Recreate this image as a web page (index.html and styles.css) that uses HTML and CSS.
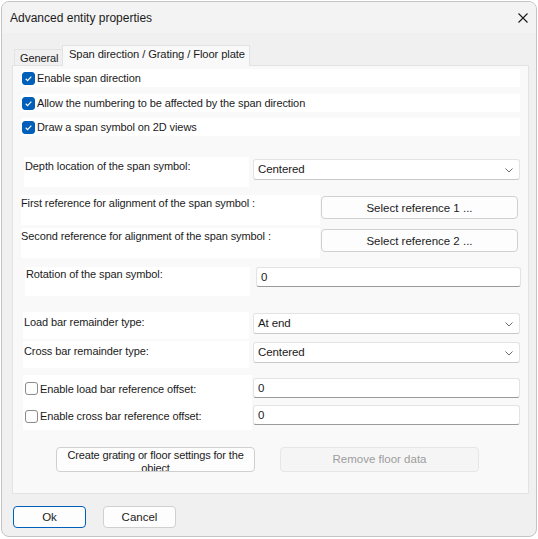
FILE: index.html
```html
<!DOCTYPE html>
<html lang="en">
<head>
    <meta charset="UTF-8">
    <title>Advanced entity properties</title>
    <link rel="stylesheet" href="styles.css">
</head>
<body>
    <div class="window">
        <div class="titlebar">
            <span class="title">Advanced entity properties</span>
            <svg class="close" width="10" height="10" viewBox="0 0 10 10">
                <path d="M0.5 0.5 L9.5 9.5 M9.5 0.5 L0.5 9.5" stroke="#1a1a1a" stroke-width="1.1" fill="none"/>
            </svg>
        </div>

        <div class="dialog-body">
            <div class="tabs">
                <div class="tab">General</div>
                <div class="tab active">Span direction / Grating / Floor plate</div>
            </div>

            <div class="panel">
                <div class="check-row">
                    <span class="checkbox checked"><svg viewBox="0 0 13 13"><path d="M3.2 6.8 L5.4 9 L9.8 4.3" /></svg></span>
                    <span>Enable span direction</span>
                </div>
                <div class="check-row gap-7">
                    <span class="checkbox checked"><svg viewBox="0 0 13 13"><path d="M3.2 6.8 L5.4 9 L9.8 4.3" /></svg></span>
                    <span>Allow the numbering to be affected by the span direction</span>
                </div>
                <div class="check-row gap-6">
                    <span class="checkbox checked"><svg viewBox="0 0 13 13"><path d="M3.2 6.8 L5.4 9 L9.8 4.3" /></svg></span>
                    <span>Draw a span symbol on 2D views</span>
                </div>

                <div class="row row-depth">
                    <div class="label-box">Depth location of the span symbol:</div>
                    <div class="select">Centered<svg class="chevron" viewBox="0 0 8 5"><path d="M0.5 0.5 L4 4 L7.5 0.5"/></svg></div>
                </div>

                <div class="row row-ref">
                    <div class="label-box">First reference for alignment of the span symbol :</div>
                    <button class="btn ref-btn">Select reference 1 ...</button>
                </div>
                <div class="row row-ref second">
                    <div class="label-box">Second reference for alignment of the span symbol :</div>
                    <button class="btn ref-btn">Select reference 2 ...</button>
                </div>

                <div class="row row-rotation">
                    <div class="label-box">Rotation of the span symbol:</div>
                    <div class="input">0</div>
                </div>

                <div class="row row-remainder">
                    <div class="label-box">Load bar remainder type:</div>
                    <div class="select">At end<svg class="chevron" viewBox="0 0 8 5"><path d="M0.5 0.5 L4 4 L7.5 0.5"/></svg></div>
                </div>
                <div class="row row-remainder second">
                    <div class="label-box">Cross bar remainder type:</div>
                    <div class="select">Centered<svg class="chevron" viewBox="0 0 8 5"><path d="M0.5 0.5 L4 4 L7.5 0.5"/></svg></div>
                </div>

                <div class="offsets">
                    <div class="row row-offset">
                        <div class="label-box">
                            <span class="checkbox"></span>
                            <span>Enable load bar reference offset:</span>
                        </div>
                        <div class="input">0</div>
                    </div>
                    <div class="row row-offset second">
                        <div class="label-box">
                            <span class="checkbox"></span>
                            <span>Enable cross bar reference offset:</span>
                        </div>
                        <div class="input">0</div>
                    </div>
                </div>

                <div class="row floor-actions">
                    <button class="btn floor-btn create">Create grating or floor settings for the object</button>
                    <button class="btn floor-btn" disabled>Remove floor data</button>
                </div>
            </div>

            <div class="footer">
                <button class="btn footer-btn default">Ok</button>
                <button class="btn footer-btn">Cancel</button>
            </div>
        </div>
    </div>
</body>
</html>
```

FILE: styles.css
```css
:root {
    --text: #1b1b1b;
    --accent: #005fb8;
    --border-soft: #e3e3e3;
    --border-btn: #d0d0d0;
}

body {
    margin: 0;
    background: #ffffff;
    font-family: "Liberation Sans", Arial, sans-serif;
    font-size: 11px;
    letter-spacing: -0.1px;
    color: var(--text);
}

.window {
    box-sizing: border-box;
    width: 536px;
    height: 536px;
    margin: 1px;
    border: 1px solid #c4c4c4;
    border-radius: 8px;
    overflow: hidden;
    background: #f0f0f0;
    display: flex;
    flex-direction: column;
}

.titlebar {
    height: 31px;
    flex: none;
    background: #f3f3f3;
    display: flex;
    align-items: center;
    justify-content: space-between;
    padding: 0 8px 0 8px;
}

.title {
    font-size: 12px;
    letter-spacing: 0;
    padding-top: 1px;
}

.close {
    display: block;
    margin-top: 1px;
}

.dialog-body {
    flex: 1;
    display: flex;
    flex-direction: column;
}

/* tab strip */
.tabs {
    display: flex;
    align-items: flex-end;
    margin: 11px 0 0 12px;
    height: 21px;
}

.tab {
    box-sizing: border-box;
    height: 16px;
    width: 48px;
    padding: 2px 0 0 5px;
    border: 1px solid var(--border-soft);
    border-bottom: none;
    border-right: none;
    background: #f0f0f0;
    white-space: nowrap;
}

.tab.active {
    position: relative;
    z-index: 1;
    width: 188px;
    height: 21px;
    margin-bottom: -1px;
    padding: 2px 0 0 6px;
    border-right: 1px solid var(--border-soft);
    background: #f9f9f9;
    font-size: 11.2px;
}

.panel {
    box-sizing: border-box;
    width: 517px;
    height: 429px;
    margin-left: 10px;
    border: 1px solid var(--border-soft);
    background: #f9f9f9;
    display: flex;
    flex-direction: column;
}

/* checkbox rows at the top */
.check-row {
    display: flex;
    align-items: center;
    gap: 2px;
    height: 18px;
    width: 498px;
    margin: 3px 0 0 8px;
    padding-left: 1px;
    background: #ffffff;
}

.check-row.gap-7 { margin-top: 7px; }
.check-row.gap-6 { margin-top: 6px; }

.checkbox {
    box-sizing: border-box;
    flex: none;
    width: 13px;
    height: 13px;
    border: 1px solid #8a8a8a;
    border-radius: 3px;
    background: #fdfdfd;
}

.checkbox.checked {
    border-color: var(--accent);
    background: var(--accent);
}

.checkbox svg {
    display: block;
    width: 11px;
    height: 11px;
}

.checkbox path {
    fill: none;
    stroke: #ffffff;
    stroke-width: 1.3;
}

/* label + control rows */
.row {
    display: flex;
    align-items: flex-start;
}

.label-box {
    box-sizing: border-box;
    background: #ffffff;
    flex: none;
    line-height: 14px;
}

.select,
.input {
    box-sizing: border-box;
    position: relative;
    flex: none;
    height: 21px;
    width: 267px;
    padding-left: 4px;
    line-height: 19px;
    background: #ffffff;
    border: 1px solid var(--border-soft);
    border-bottom-color: #c9c9c9;
    border-radius: 3px;
    font-size: 11.5px;
}

.chevron {
    position: absolute;
    right: 6px;
    top: 8px;
    width: 8px;
    height: 5px;
}

.chevron path {
    fill: none;
    stroke: #6b6b6b;
    stroke-width: 1;
}

.btn {
    box-sizing: border-box;
    font: inherit;
    font-size: 11.5px;
    color: var(--text);
    background: #fdfdfd;
    border: 1px solid var(--border-btn);
    border-radius: 4px;
    padding: 0;
}

.btn:disabled {
    color: #9d9d9d;
    background: #f5f5f5;
    border-color: #e6e6e6;
}

.row-depth { margin: 21px 0 0 11px; }
.row-depth .label-box { width: 225px; height: 30px; padding: 2px 0 0 1px; }
.row-depth .select { margin: 2px 0 0 4px; }

.row-ref { margin: 8px 0 0 8px; }
.row-ref.second { margin-top: 3px; }
.row-ref .label-box { width: 299px; height: 30px; padding-top: 1px; }
.ref-btn { width: 197px; height: 23px; margin: 1px 0 0 1px; }

.row-rotation { margin: 9px 0 0 12px; }
.row-rotation .label-box { width: 225px; height: 29px; padding: 0 0 0 1px; }
.row-rotation .input { width: 265px; height: 20px; margin-left: 6px; line-height: 18px; border-bottom-color: #9a9a9a; }

.row-remainder { margin: 16px 0 0 10px; }
.row-remainder.second { margin-top: 2px; }
.row-remainder .label-box { width: 226px; height: 27px; padding: 3px 0 0 1px; }
.row-remainder .select { margin: 1px 0 0 4px; }

.offsets { margin: 7px 0 0 10px; }
.row-offset .label-box {
    width: 229px;
    height: 27px;
    display: flex;
    align-items: center;
    gap: 2px;
    padding-left: 2px;
}
.row-offset.second .label-box { height: 28px; }
.row-offset .input { height: 20px; line-height: 18px; margin: 3px 0 0 1px; border-bottom-color: #9a9a9a; }

.floor-actions { margin: 17px 0 0 43px; gap: 25px; }
.floor-btn { width: 199px; height: 25px; line-height: 13px; }
.floor-btn.create {
    overflow: hidden;
    display: flex;
    align-items: flex-start;
    justify-content: center;
    text-align: center;
    padding: 1px 2px 0;
    font-size: 11px;
    letter-spacing: -0.15px;
    line-height: 12.5px;
}

.footer {
    display: flex;
    gap: 17px;
    margin: 12px 0 0 11px;
}

.footer-btn { width: 73px; height: 22px; }
.footer-btn.default { border-color: var(--accent); }
```
